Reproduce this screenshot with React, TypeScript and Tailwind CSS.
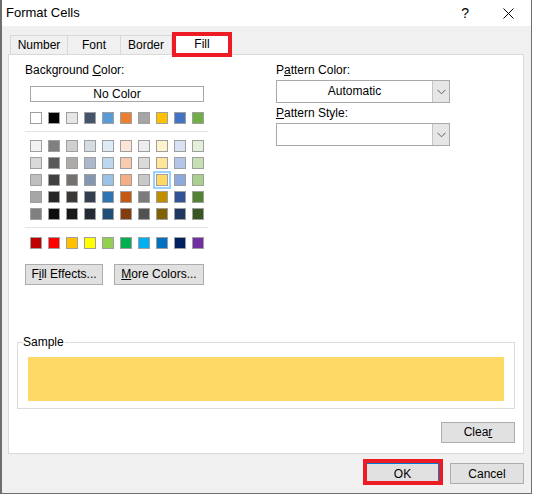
import React from "react";

const theme = ["#ffffff", "#000000", "#e7e6e6", "#44546a", "#5b9bd5", "#ed7d31", "#a5a5a5", "#ffc000", "#4472c4", "#70ad47"];

const tints = [
  ["#f2f2f2", "#808080", "#d0cece", "#d6dce4", "#ddebf7", "#fce4d6", "#ededed", "#fff2cc", "#d9e1f2", "#e2efda"],
  ["#d9d9d9", "#595959", "#aeaaaa", "#acb9ca", "#bdd7ee", "#f8cbad", "#dbdbdb", "#ffe699", "#b4c6e7", "#c6e0b4"],
  ["#bfbfbf", "#404040", "#767171", "#8497b0", "#9bc2e6", "#f4b084", "#c9c9c9", "#ffd966", "#8ea9db", "#a9d08e"],
  ["#a6a6a6", "#262626", "#3b3838", "#333f4f", "#2f75b5", "#c65911", "#7b7b7b", "#bf8f00", "#305496", "#548235"],
  ["#808080", "#0d0d0d", "#181717", "#222b35", "#1f4e78", "#833c0c", "#525252", "#806000", "#203764", "#375623"],
];

const standard = ["#c00000", "#ff0000", "#ffc000", "#ffff00", "#92d050", "#00b050", "#00b0f0", "#0070c0", "#002060", "#7030a0"];

function Swatch({ color, selected }: { color: string; selected?: boolean }) {
  return (
    <div
      className={`w-[12px] h-[12px] border border-[#9f9f9f] shrink-0 ${
        selected ? "outline-2 outline-offset-1 outline-[#99d1ff]" : ""
      }`}
      style={{ backgroundColor: color }}
    />
  );
}

function SwatchRow({ colors, selectedIndex }: { colors: string[]; selectedIndex?: number }) {
  return (
    <div className="flex gap-[6px] ml-[5px]">
      {colors.map((c, i) => (
        <Swatch key={i} color={c} selected={i === selectedIndex} />
      ))}
    </div>
  );
}

function Btn({ children, w }: { children: React.ReactNode; w: string }) {
  return (
    <div className={`${w} h-[21px] bg-[#e1e1e1] border border-[#adadad] flex items-center justify-center text-[12px] text-black`}>
      {children}
    </div>
  );
}

function Combo({ value }: { value?: string }) {
  return (
    <div className="w-[174px] h-[23px] bg-white border border-[#a9a9a9] flex">
      <div className="flex-1 flex items-center justify-center text-[12px] text-black">{value}</div>
      <div className="w-[17px] h-full bg-[#e6e6e6] border-l border-[#c4c4c4] flex items-center justify-center">
        <svg width="9" height="6" viewBox="0 0 9 6">
          <polyline points="0.5,0.8 4.5,4.8 8.5,0.8" fill="none" stroke="#606060" strokeWidth="1" />
        </svg>
      </div>
    </div>
  );
}

export default function App() {
  return (
    <div className="w-[533px] h-[495px] bg-white font-['Liberation_Sans',Arial,sans-serif] overflow-hidden">
      <div className="w-[532px] h-[494px] border-l-2 border-r border-b border-[#6e6e6e] flex flex-col">
        {/* Title bar */}
        <div className="h-[26px] bg-white flex items-center shrink-0">
          <span className="ml-[4px] text-[13px] text-black">Format Cells</span>
          <span className="ml-auto mr-[34px] text-[14px] text-black">?</span>
          <svg className="mr-[17px]" width="11" height="11" viewBox="0 0 11 11">
            <path d="M0.5 0.5L10.5 10.5M10.5 0.5L0.5 10.5" stroke="#000" strokeWidth="1" />
          </svg>
        </div>

        {/* Body */}
        <div className="flex-1 bg-[#f0f0f0] pl-[6px] pr-[7px] pt-[7px] flex flex-col">
          {/* Tabs */}
          <div className="h-[21px] flex items-end pl-[2px] text-[12px] text-black">
            <div className="w-[57px] h-[19px] border-l border-t border-[#d9d9d9] flex items-center justify-center">Number</div>
            <div className="w-[53px] h-[19px] border-l border-t border-[#d9d9d9] flex items-center justify-center">Font</div>
            <div className="w-[52px] h-[19px] border-l border-t border-r border-[#d9d9d9] flex items-center justify-center">Border</div>
            <div className="relative z-10 ml-[2px] w-[56px] h-[22px] mb-[-1px] bg-white flex items-center justify-center">
              Fill
              <div className="absolute left-[-2px] top-[-1px] w-[60px] h-[25px] border-4 border-[#ed1c24]" />
            </div>
          </div>

          {/* Panel */}
          <div className="w-[516px] h-[400px] bg-white border border-[#d9d9d9] flex flex-col text-[12px] leading-[15px] text-black">
            <div className="flex pt-[8px] pl-[16px]">
              {/* Left column */}
              <div className="w-[183px] flex flex-col">
                <div>
                  Background <span className="underline">C</span>olor:
                </div>
                <div className="ml-[5px] mt-[8px] w-[174px] h-[16px] border border-[#a6a6a6] flex items-center justify-center">
                  No Color
                </div>
                <div className="mt-[10px]">
                  <SwatchRow colors={theme} />
                </div>
                <div className="mt-[7px] h-px bg-[#e2e2e2]" />
                <div className="mt-[8px] flex flex-col gap-[5px]">
                  {tints.map((row, i) => (
                    <SwatchRow key={i} colors={row} selectedIndex={i === 2 ? 7 : undefined} />
                  ))}
                </div>
                <div className="mt-[7px] h-px bg-[#e2e2e2]" />
                <div className="mt-[9px]">
                  <SwatchRow colors={standard} />
                </div>
                <div className="mt-[15px] flex gap-[11px]">
                  <Btn w="w-[78px]">
                    <span>
                      F<span className="underline">i</span>ll Effects...
                    </span>
                  </Btn>
                  <Btn w="w-[90px]">
                    <span>
                      <span className="underline">M</span>ore Colors...
                    </span>
                  </Btn>
                </div>
              </div>

              {/* Right column */}
              <div className="ml-[68px] flex flex-col">
                <div>
                  P<span className="underline">a</span>ttern Color:
                </div>
                <div className="mt-[2px]">
                  <Combo value="Automatic" />
                </div>
                <div className="mt-[3px]">
                  <span className="underline">P</span>attern Style:
                </div>
                <div className="mt-[2px]">
                  <Combo />
                </div>
              </div>
            </div>

            {/* Sample */}
            <div className="relative ml-[8px] mt-[57px] w-[498px] h-[67px] border border-[#dcdcdc] pt-[14px] px-[10px]">
              <span className="absolute left-[5px] top-[-8px] bg-white pr-px">Sample</span>
              <div className="h-[44px] bg-[#ffd966]" />
            </div>

            <div className="flex justify-end mt-[13px] mr-[8px]">
              <Btn w="w-[74px]">
                <span>
                  Clea<span className="underline">r</span>
                </span>
              </Btn>
            </div>
          </div>

          {/* Dialog buttons */}
          <div className="mt-[9px] flex justify-end gap-[11px] text-[12px]">
            <div className="relative">
              <div className="w-[73px] h-[21px] bg-[#e1e1e1] border border-[#0078d7] flex items-center justify-center text-black">OK</div>
              <div className="absolute left-[-3px] top-[-4px] w-[80px] h-[26px] border-4 border-[#ed1c24]" />
            </div>
            <Btn w="w-[74px]">Cancel</Btn>
          </div>
        </div>
      </div>
    </div>
  );
}
